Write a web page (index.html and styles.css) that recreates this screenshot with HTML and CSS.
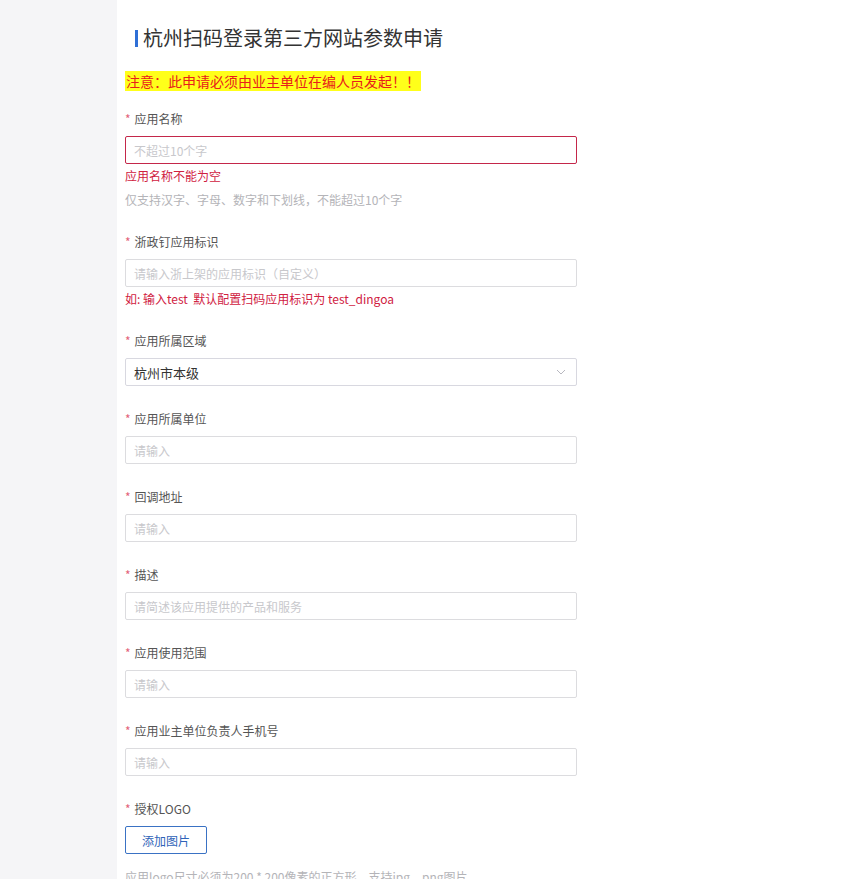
FILE: index.html
```html
<!DOCTYPE html>
<html>
<head>
  <title>杭州扫码登录第三方网站参数申请</title>
  <link rel="stylesheet" href="styles.css">
</head>
<body>
  <div class="page">
    <div class="side"></div>
    <div class="main">
      <h1 class="title">杭州扫码登录第三方网站参数申请</h1>
      <div class="notice"><span>注意：此申请必须由业主单位在编人员发起！！</span></div>

      <div class="form-item">
        <label><span class="star">*</span>应用名称</label>
        <input type="text" class="error" placeholder="不超过10个字">
        <p class="msg-error">应用名称不能为空</p>
        <p class="msg-help">仅支持汉字、字母、数字和下划线，不能超过10个字</p>
      </div>

      <div class="form-item">
        <label><span class="star">*</span>浙政钉应用标识</label>
        <input type="text" placeholder="请输入浙上架的应用标识（自定义）">
        <p class="msg-error">如: 输入test&nbsp; 默认配置扫码应用标识为 test_dingoa</p>
      </div>

      <div class="form-item">
        <label><span class="star">*</span>应用所属区域</label>
        <div class="select">
          <span>杭州市本级</span>
          <svg width="10" height="6" viewBox="0 0 10 6"><path d="M1 1l4 4 4-4" fill="none" stroke="#b8b8c0" stroke-width="1"/></svg>
        </div>
      </div>

      <div class="form-item">
        <label><span class="star">*</span>应用所属单位</label>
        <input type="text" placeholder="请输入">
      </div>

      <div class="form-item">
        <label><span class="star">*</span>回调地址</label>
        <input type="text" placeholder="请输入">
      </div>

      <div class="form-item">
        <label><span class="star">*</span>描述</label>
        <input type="text" placeholder="请简述该应用提供的产品和服务">
      </div>

      <div class="form-item">
        <label><span class="star">*</span>应用使用范围</label>
        <input type="text" placeholder="请输入">
      </div>

      <div class="form-item">
        <label><span class="star">*</span>应用业主单位负责人手机号</label>
        <input type="text" placeholder="请输入">
      </div>

      <div class="form-item">
        <label><span class="star">*</span>授权LOGO</label>
        <button class="upload">添加图片</button>
        <p class="msg-help tip">应用logo尺寸必须为200 * 200像素的正方形，支持jpg、png图片</p>
      </div>
    </div>
  </div>
</body>
</html>
```

FILE: styles.css
```css
/* page base */
body {
  margin: 0;
  font-family: "Noto Sans CJK SC", "Noto Sans", sans-serif;
  background-color: #fff;
  color: #333;
}

.page {
  display: flex;
  min-height: 879px;
}

/* grey strip on the left */
.side {
  width: 117px;
  background-color: #f5f5f7;
}

.main {
  flex: 1;
  padding: 24px 0 0 8px;
}

/* heading with the blue bar */
.title {
  margin: 0;
  padding-left: 10px;
  font-size: 20px;
  line-height: 28px;
  font-weight: normal;
  color: #333;
  display: flex;
  align-items: center;
}

.title::before {
  content: "";
  display: block;
  width: 3px;
  height: 17px;
  background-color: #2f6fd6;
  margin-right: 5px;
}

.notice {
  margin-top: 21px;
  margin-bottom: 21px;
  font-size: 14px;
  line-height: 16px;
}

.notice span {
  background-color: #ffff1a;
  color: #e8201a;
  padding: 0 1px;
}

/* form rows */
.form-item {
  margin-bottom: 24px;
}

.form-item label {
  display: block;
  font-size: 12px;
  line-height: 18px;
  color: #555;
  margin-bottom: 8px;
}

.star {
  color: #e3627a;
  margin-right: 4px;
}

.form-item input {
  display: block;
  box-sizing: border-box;
  width: 452px;
  height: 28px;
  padding: 0 8px;
  border: 1px solid #dcdcdf;
  border-radius: 2px;
  font-family: inherit;
  font-size: 12px;
  color: #333;
  background-color: #fff;
}

.form-item input::placeholder {
  color: #c8c8cc;
}

.form-item input.error {
  border-color: #c4274a;
}

.msg-error {
  margin: 3px 0 0;
  font-size: 12px;
  line-height: 18px;
  color: #d0213f;
}

.msg-help {
  margin: 6px 0 0;
  font-size: 12px;
  line-height: 18px;
  color: #b4b4b8;
}

/* select box */
.select {
  box-sizing: border-box;
  width: 452px;
  height: 28px;
  padding: 0 10px 0 8px;
  border: 1px solid #d8d8e0;
  border-radius: 2px;
  display: flex;
  align-items: center;
  justify-content: space-between;
  font-size: 13px;
  color: #333;
}

/* upload button */
.upload {
  display: block;
  width: 82px;
  height: 28px;
  border: 1px solid #3a72c4;
  border-radius: 2px;
  background-color: #fff;
  color: #2f63b8;
  font-family: inherit;
  font-size: 12px;
  cursor: pointer;
}

.tip {
  margin-top: 14px;
}
```
